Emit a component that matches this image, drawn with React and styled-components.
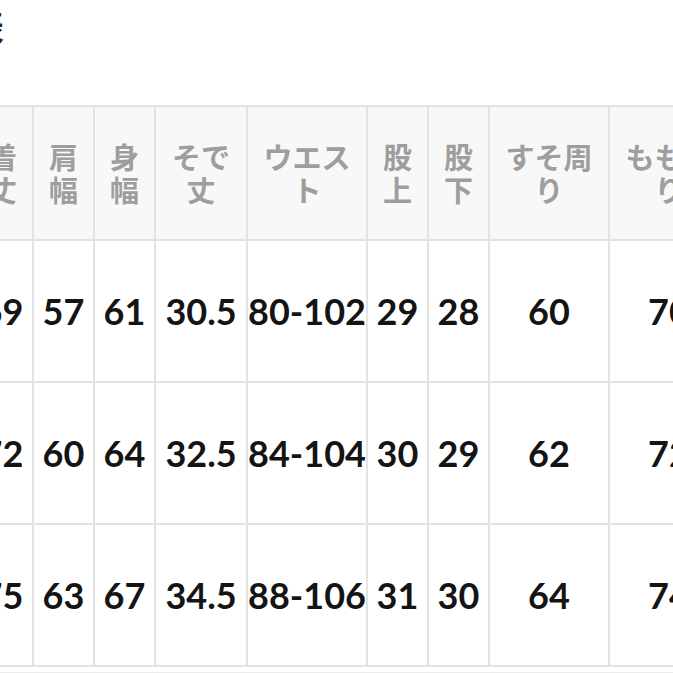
import React from 'react'
import styled, { createGlobalStyle } from 'styled-components'

const GlobalStyle = createGlobalStyle`
  html, body {
    margin: 0;
    padding: 0;
    background: #ffffff;
  }
  body {
    font-family: "Lato", "Noto Sans CJK JP", sans-serif;
  }
`

const Page = styled.div`
  width: 673px;
  height: 673px;
  overflow: hidden;
  background: #ffffff;
`

const Title = styled.h2`
  margin: 0 0 53px -131px;
  height: 52px;
  font: 700 34px/52px "Noto Sans CJK JP", sans-serif;
  color: #222;
  white-space: nowrap;
`

const Table = styled.div`
  display: grid;
  grid-template-columns: ${p => p.$cols.map(c => `${c}px`).join(' ')};
  grid-template-rows: 132px repeat(${p => p.$rows}, 140px);
  gap: 2px;
  padding: 2px;
  width: max-content;
  margin-left: -29px;
  background: #e3e3e3;
`

const HeadCell = styled.div`
  display: flex;
  align-items: center;
  justify-content: center;
  text-align: center;
  background: #f8f8f8;
  color: #9e9e9e;
  font: 700 29px/33px "Noto Sans CJK JP", sans-serif;
  white-space: nowrap;
`

const Cell = styled.div`
  display: flex;
  align-items: center;
  justify-content: center;
  background: #ffffff;
  color: #141414;
  font: 700 36px/1 "Lato", sans-serif;
  white-space: nowrap;
`

const Divider = styled.div`
  margin-top: 5px;
  height: 1px;
  background: #ececec;
`

const cols = [59, 59, 59, 90, 118, 59, 59, 118, 118]

const heads = [
  ['着', '丈'],
  ['肩', '幅'],
  ['身', '幅'],
  ['そで', '丈'],
  ['ウエス', 'ト'],
  ['股', '上'],
  ['股', '下'],
  ['すそ周', 'り'],
  ['もも周', 'り'],
]

const rows = [
  ['69', '57', '61', '30.5', '80-102', '29', '28', '60', '70'],
  ['72', '60', '64', '32.5', '84-104', '30', '29', '62', '72'],
  ['75', '63', '67', '34.5', '88-106', '31', '30', '64', '74'],
]

export default function App() {
  return (
    <>
      <GlobalStyle />
      <Page>
        <Title>サイズ表</Title>
        <Table $cols={cols} $rows={rows.length}>
          {heads.map((h, i) => (
            <HeadCell key={'h' + i}>
              {h[0]}
              <br />
              {h[1]}
            </HeadCell>
          ))}
          {rows.map((r, ri) =>
            r.map((v, ci) => <Cell key={ri + '-' + ci}>{v}</Cell>)
          )}
        </Table>
        <Divider />
      </Page>
    </>
  )
}
